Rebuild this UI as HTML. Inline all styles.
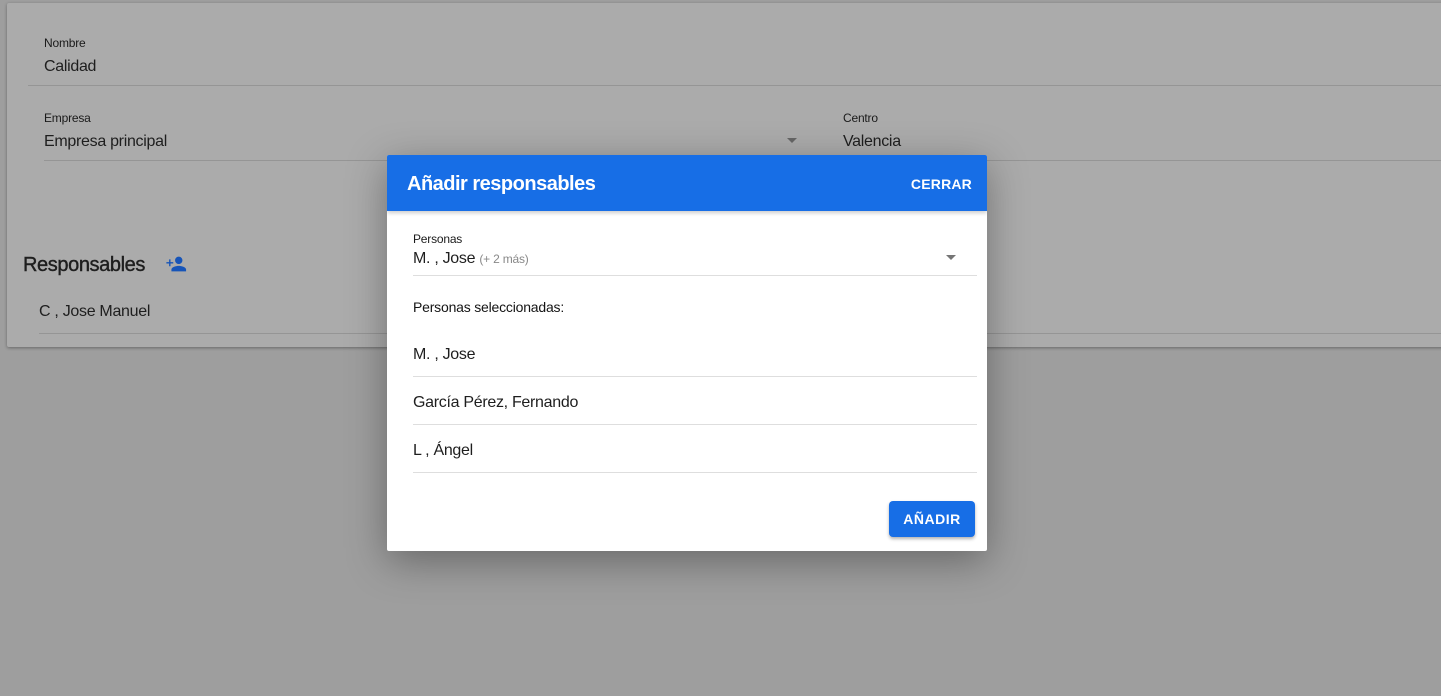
<!DOCTYPE html>
<html><head><meta charset="utf-8"><style>
*{box-sizing:border-box;margin:0;padding:0}
body{width:1441px;height:696px;overflow:hidden;background:#9e9e9e;font-family:"Liberation Sans",Arial,sans-serif;position:relative;color:#141414}
.card{position:absolute;left:7px;top:3px;width:1450px;height:344px;background:#ababab;box-shadow:0 1px 3px rgba(0,0,0,.35);border-radius:2px}
.abs{position:absolute}
.lbl{font-size:12px;color:#1a1a1a;letter-spacing:-.2px}
.val{font-size:16px;color:#1e1e1e;letter-spacing:-.3px}
.line{position:absolute;height:1px;background:#959595}
.dlg{position:absolute;left:387px;top:155px;width:600px;height:396px;background:#fff;box-shadow:0 10px 40px rgba(0,0,0,.35);border-radius:2px;overflow:hidden}
.hdr{height:56px;background:#176ee6;color:#fff;position:relative;box-shadow:0 2px 4px rgba(0,0,0,.2)}
.dl{position:absolute;left:26px;width:564px;height:1px;background:#dedede}
</style></head><body>
<div class="card">
 <div class="abs lbl" style="left:37px;top:33px">Nombre</div>
 <div class="abs val" style="left:37px;top:55px">Calidad</div>
 <div class="line" style="left:21px;top:82px;width:1430px"></div>
 <div class="abs lbl" style="left:37px;top:108px">Empresa</div>
 <div class="abs val" style="left:37px;top:130px">Empresa principal</div>
 <div class="abs" style="left:780px;top:135px;width:0;height:0;border-left:5px solid transparent;border-right:5px solid transparent;border-top:5px solid #666"></div>
 <div class="line" style="left:37px;top:157px;width:758px"></div>
 <div class="abs lbl" style="left:836px;top:108px">Centro</div>
 <div class="abs val" style="left:836px;top:130px">Valencia</div>
 <div class="line" style="left:836px;top:157px;width:610px"></div>
 <div class="abs" style="left:16px;top:251px;font-size:20px;color:#1e1e1e;letter-spacing:-.4px;-webkit-text-stroke:.4px #1e1e1e">Responsables</div>
 <svg class="abs" style="left:158px;top:250px" width="22" height="22" viewBox="0 0 24 24"><path fill="#1654b8" d="M15 12c2.2 0 4-1.8 4-4s-1.8-4-4-4-4 1.8-4 4 1.8 4 4 4zm0 2c-2.7 0-8 1.3-8 4v2h16v-2c0-2.7-5.3-4-8-4zM6 10V7H4.5v3h-3v1.5h3v3H6v-3h3V10z"/></svg>
 <div class="abs val" style="left:32px;top:300px">C , Jose Manuel</div>
 <div class="line" style="left:32px;top:330px;width:1420px"></div>
</div>
<div class="dlg">
 <div class="hdr">
  <div class="abs" style="left:20px;top:18px;font-size:20px;font-weight:bold;letter-spacing:-.5px">Añadir responsables</div>
  <div class="abs" style="right:15px;top:21px;font-size:14px;font-weight:bold;letter-spacing:.2px">CERRAR</div>
 </div>
 <div class="abs lbl" style="left:26px;top:77px">Personas</div>
 <div class="abs val" style="left:26px;top:95px">M. , Jose <span style="font-size:12px;color:#888;letter-spacing:-.2px">(+ 2 más)</span></div>
 <div class="abs" style="left:559px;top:100px;width:0;height:0;border-left:5px solid transparent;border-right:5px solid transparent;border-top:5px solid #757575"></div>
 <div class="dl" style="top:120px"></div>
 <div class="abs" style="left:26px;top:144px;font-size:14px;letter-spacing:-.2px">Personas seleccionadas:</div>
 <div class="abs val" style="left:26px;top:191px">M. , Jose</div>
 <div class="dl" style="top:221px"></div>
 <div class="abs val" style="left:26px;top:239px">García Pérez, Fernando</div>
 <div class="dl" style="top:269px"></div>
 <div class="abs val" style="left:26px;top:287px">L , Ángel</div>
 <div class="dl" style="top:317px"></div>
 <div class="abs" style="left:502px;top:346px;width:86px;height:36px;background:#176ee6;border-radius:4px;box-shadow:0 2px 3px rgba(0,0,0,.3);color:#fff;font-size:14px;font-weight:bold;letter-spacing:.5px;text-align:center;line-height:36px">AÑADIR</div>
</div>
</body></html>
